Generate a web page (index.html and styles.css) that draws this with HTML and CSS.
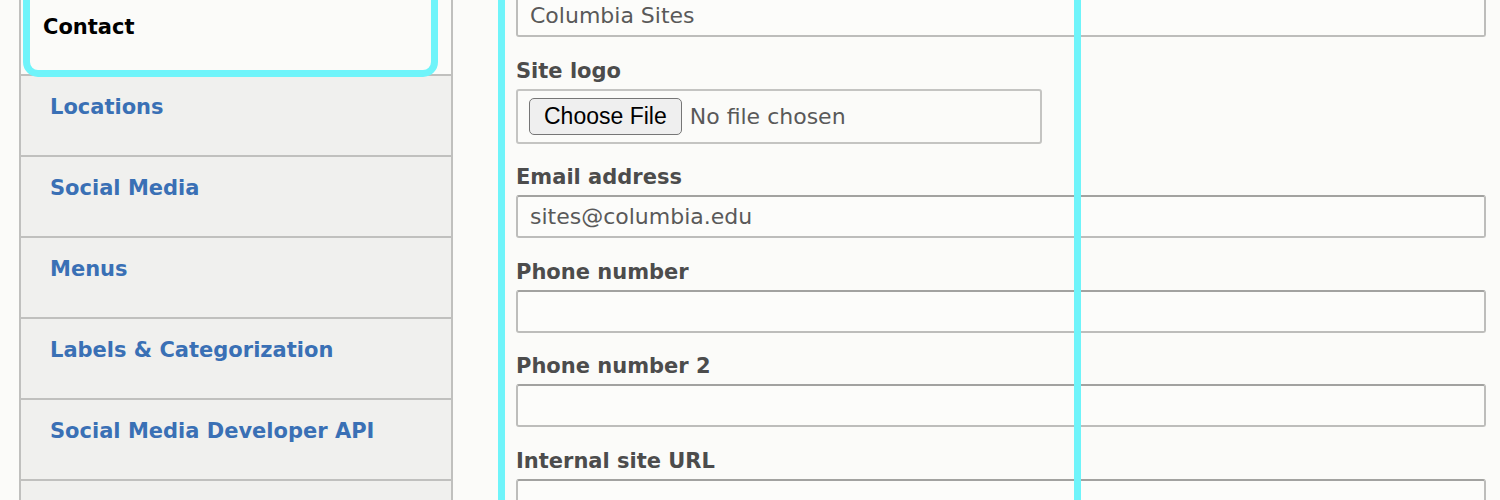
FILE: index.html
```html
<!DOCTYPE html>
<html lang="en">
<head>
<meta charset="utf-8">
<title>Contact settings</title>
<link rel="stylesheet" href="styles.css">
</head>
<body>
<div class="page">
  <nav class="tabs">
    <div class="tab active"><span class="tab-title">Contact</span></div>
    <div class="tab"><a class="tab-title" href="#">Locations</a></div>
    <div class="tab"><a class="tab-title" href="#">Social Media</a></div>
    <div class="tab"><a class="tab-title" href="#">Menus</a></div>
    <div class="tab"><a class="tab-title" href="#">Labels &amp; Categorization</a></div>
    <div class="tab"><a class="tab-title" href="#">Social Media Developer API</a></div>
    <div class="tab"></div>
    <div class="focus-ring"></div>
  </nav>
  <main class="pane">
    <div class="field">
      <div class="input">Columbia Sites</div>
    </div>
    <div class="field">
      <label class="label">Site logo</label>
      <div class="file">
        <span class="file-btn">Choose File</span>
        <span class="file-name">No file chosen</span>
      </div>
    </div>
    <div class="field">
      <label class="label">Email address</label>
      <div class="input">sites@columbia.edu</div>
    </div>
    <div class="field">
      <label class="label">Phone number</label>
      <div class="input"></div>
    </div>
    <div class="field">
      <label class="label">Phone number 2</label>
      <div class="input"></div>
    </div>
    <div class="field">
      <label class="label">Internal site URL</label>
      <div class="input"></div>
    </div>
    <div class="highlight"></div>
  </main>
</div>
</body>
</html>
```
FILE: styles.css
```css
html, body {
  margin: 0;
  padding: 0;
  background: #fbfbf9;
  overflow: hidden;
}
body {
  width: 1500px;
  height: 500px;
  font-family: "DejaVu Sans", "Verdana", sans-serif;
}
.page {
  display: flex;
  align-items: flex-start;
}
.tabs {
  position: relative;
  flex: 0 0 430px;
  margin-left: 19px;
  margin-top: -5px;
  border-left: 2px solid #c0c0be;
  border-right: 2px solid #c0c0be;
  background: #f0f0ee;
}
.tab {
  height: 81px;
  box-sizing: border-box;
  padding: 18px 20px 0 29px;
  border-bottom: 2px solid #c0c0be;
  background: #f0f0ee;
}
.tab.active {
  background: #fbfbf9;
  padding-left: 22px;
  padding-top: 19px;
}
.tab-title {
  display: block;
  font-size: 21px;
  line-height: 27px;
  font-weight: bold;
  color: #3a70b5;
  text-decoration: none;
}
.tab.active .tab-title {
  color: #000;
}
.focus-ring {
  position: absolute;
  left: 2px;
  top: -20px;
  width: 415px;
  height: 102px;
  box-sizing: border-box;
  border: 7px solid #6ff4fa;
  border-radius: 15px;
}
.pane {
  position: relative;
  flex: 1;
  margin-top: -6px;
  padding: 0 14px 0 63px;
}
.field {
  margin-bottom: 20.5px;
}
.label {
  display: block;
  font-size: 21px;
  line-height: 27px;
  font-weight: bold;
  color: #4c4c4c;
  margin-bottom: 4px;
}
.input {
  height: 43px;
  box-sizing: border-box;
  border: 2px solid #bdbdbb;
  border-top-color: #a2a2a0;
  border-radius: 3px;
  background: #fcfcfa;
  padding: 0 12px;
  font-size: 22px;
  line-height: 39px;
  color: #595959;
}
.file {
  width: 526px;
  height: 55px;
  box-sizing: border-box;
  border: 2px solid #c4c4c2;
  border-radius: 3px;
  display: flex;
  align-items: center;
  padding: 0 11px;
  gap: 8px;
}
.file-btn {
  height: 37px;
  box-sizing: border-box;
  padding: 0 14px;
  border: 1.5px solid #767676;
  border-radius: 5px;
  background: #efefef;
  font-family: "Liberation Sans", Arial, sans-serif;
  font-size: 23px;
  line-height: 34px;
  color: #000;
}
.file-name {
  font-size: 22px;
  color: #595959;
}
.highlight {
  position: absolute;
  left: 45px;
  top: -20px;
  width: 583px;
  height: 560px;
  box-sizing: border-box;
  border: 7px solid #6ff4fa;
}
```
